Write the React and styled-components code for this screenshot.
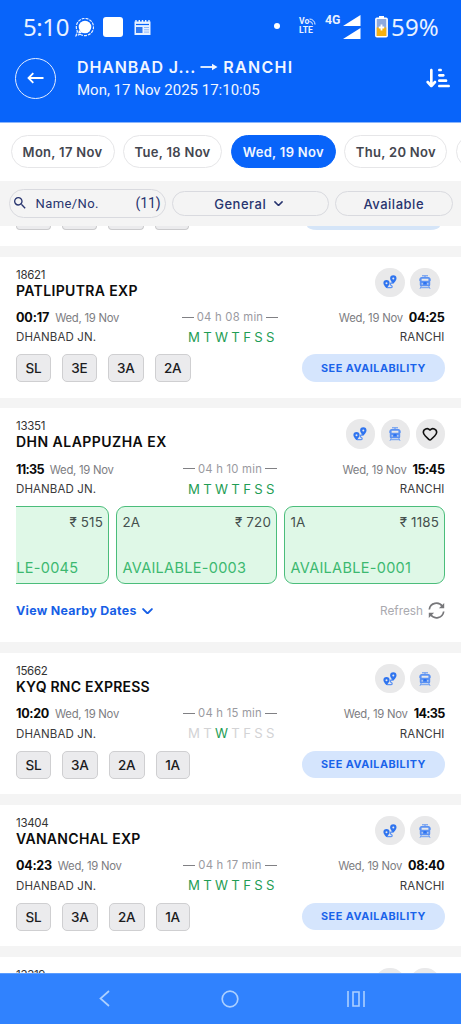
import React from 'react';
import styled, { createGlobalStyle, css } from 'styled-components';
import { FaArrowDownShortWide } from 'react-icons/fa6';
import { MdSearch } from 'react-icons/md';
import { Heart } from 'lucide-react';

const GlobalStyle = createGlobalStyle`
   * {
      box-sizing: border-box;
   }
   body {
      margin: 0;
      background: #fff;
      font-family: Inter, 'Open Sans', sans-serif;
   }
   button {
      font-family: inherit;
      padding: 0;
      margin: 0;
      border: 0;
      background: none;
   }
   svg {
      display: block;
      flex: none;
   }
`;

const Screen = styled.div`
   width: 461px;
   height: 1024px;
   display: flex;
   flex-direction: column;
   overflow: hidden;
   background: #f4f4f4;
`;

const Header = styled.header`
   height: 123px;
   flex: none;
   background: #0864fa;
   border-bottom: 1px solid #8cb6fb;
   color: #fff;
`;

const StatusBar = styled.div`
   height: 52px;
   padding: 2px 21px 0 23px;
   display: flex;
   align-items: center;
   font-family: 'Noto Sans', sans-serif;
`;

const StatusText = styled.span`
   width: ${({ $width }) => $width}px;
   font-size: 24px;
   line-height: 30px;
   letter-spacing: ${({ $track }) => $track}px;
   white-space: nowrap;
   color: #e9f1ff;
`;

const StatusGroup = styled.div`
   display: flex;
   align-items: center;
`;

const StatusRight = styled(StatusGroup)`
   margin-left: auto;
`;

const BatteryGroup = styled(StatusGroup)`
   margin-left: 14px;
   gap: 3px;
`;

const WhiteSquare = styled.div`
   width: 20px;
   height: 20px;
   margin: 0 11px 0 9px;
   border-radius: 3px;
   background: #fff;
`;

const Dot = styled.div`
   width: 6px;
   height: 6px;
   margin: -2px 19px 0 0;
   border-radius: 50%;
   background: #fff;
`;

const Volte = styled.div`
   width: 26px;
   margin-top: -2px;
   font: 700 8.6px/9px Roboto, sans-serif;
   color: #e9f1ff;
`;

const VolteTop = styled.div`
   display: flex;
   align-items: center;
`;

const NetworkType = styled.div`
   width: 18px;
   margin-top: -15px;
   font: 700 12.3px/14px Roboto, sans-serif;
   color: #e9f1ff;
`;

const TitleBar = styled.div`
   height: 52px;
   padding: 0 11px 0 15px;
   display: flex;
   align-items: center;
`;

const BackButton = styled.button`
   width: 41px;
   height: 41px;
   display: grid;
   place-items: center;
   border: 1.3px solid #e3edff;
   border-radius: 50%;
   color: #fff;
`;

const Titles = styled.div`
   flex: 1;
   margin: 0 0 0 21px;
`;

const Route = styled.h1`
   margin: 0;
   display: flex;
   align-items: center;
   font-size: 16px;
   line-height: 22px;
   font-weight: 600;
   letter-spacing: 0.85px;
   color: #f1f6ff;

   svg {
      margin: 0 5px 0 4px;
   }
`;

const RouteTo = styled.span`
   letter-spacing: 1.3px;
`;

const Subtitle = styled.div`
   margin-top: 1px;
   font: 400 15px/22px Roboto, sans-serif;
   color: #f1f6ff;
`;

const DateTabs = styled.nav`
   height: 57.5px;
   flex: none;
   padding: 12px 0 0 10.5px;
   display: flex;
   gap: 8.3px;
   overflow: hidden;
   background: #fff;
`;

const DateTab = styled.button`
   width: ${({ $width }) => $width}px;
   height: 33px;
   flex: none;
   border: 1px solid #e6e6e8;
   border-radius: 17px;
   font-size: 13px;
   font-weight: 600;
   letter-spacing: 0.3px;
   color: #44464f;

   ${({ $active }) =>
      $active &&
      css`
         border-color: #0864fa;
         background: #0864fa;
         color: #f1f6ff;
      `}
`;

const Filters = styled.div`
   height: 45.5px;
   flex: none;
   padding: 0 8.5px;
   display: flex;
   align-items: center;
   gap: 6.5px;
   color: #28356f;
`;

const filterPill = css`
   display: flex;
   align-items: center;
   border: 1px solid #d9dadf;
   border-radius: 15px;
`;

const SearchBox = styled.div`
   ${filterPill}
   width: 157px;
   height: 29px;
   padding: 0 4px 0 2.5px;
   font: 400 13px Roboto, sans-serif;
   letter-spacing: 0.4px;
`;

const SearchLabel = styled.span`
   flex: 1;
   margin-left: 7.5px;
`;

const Count = styled.span`
   font-size: 14px;
   letter-spacing: -0.1px;
`;

const FilterButton = styled.button`
   ${filterPill}
   width: ${({ $width }) => $width}px;
   height: 25px;
   margin-top: 1px;
   justify-content: center;
   gap: 8px;
   padding-right: ${({ $shift = 0 }) => $shift}px;
   font-size: 13px;
   font-weight: 500;
   letter-spacing: 0.52px;
   color: inherit;
`;

const TrainList = styled.main`
   flex: 1;
   min-height: 0;
   overflow: hidden;
   display: flex;
   flex-direction: column;
   gap: 10.6px;
`;

const Card = styled.article`
   height: ${({ $height }) => $height || 141.2}px;
   flex: none;
   padding: 11px 16px 0;
   background: #fff;
`;

/* the card that is mostly scrolled under the filters */
const CardTail = styled.article`
   height: 20px;
   flex: none;
   padding: 0 16px;
   display: flex;
   align-items: flex-start;
   justify-content: space-between;
   background: #fff;
`;

const ClassTails = styled.div`
   display: flex;
   gap: 10.5px;
`;

const ClassTail = styled.div`
   width: ${({ $width }) => $width}px;
   height: 4px;
   border: 1px solid #cbcbcd;
   border-top: 0;
   border-radius: 0 0 5px 5px;
   background: #ebebed;
`;

const AvailabilityTail = styled.div`
   width: 133px;
   height: 4px;
   margin-right: 5px;
   border-radius: 0 0 10px 10px / 0 0 4px 4px;
   background: #d5e5f8;
`;

const CardHead = styled.div`
   height: 39.5px;
   display: flex;
   justify-content: space-between;
`;

const TrainNumber = styled.div`
   font-size: 11.5px;
   line-height: 15px;
   letter-spacing: -0.3px;
   color: #333;
`;

const TrainName = styled.h2`
   margin: 0;
   font-size: 14px;
   line-height: 15px;
   font-weight: 600;
   letter-spacing: ${({ $track }) => $track}px;
   white-space: nowrap;
   color: #0c0c0c;
`;

const Actions = styled.div`
   display: flex;
   gap: 5.5px;
   padding-right: ${({ $inset }) => ($inset ? 5.5 : 0)}px;
`;

const RoundButton = styled.button`
   width: 29.5px;
   height: 29.5px;
   display: grid;
   place-items: center;
   border-radius: 50%;
   background: #e9e9ea;
   color: #111;
`;

const Row = styled.div`
   display: grid;
   grid-template-columns: 1fr 98px 1fr;
   align-items: center;
   height: ${({ $height }) => $height}px;
`;

const Stop = styled.div`
   display: flex;
   align-items: baseline;
   gap: 6px;
   justify-content: ${({ $end }) => ($end ? 'flex-end' : 'flex-start')};
   padding-right: ${({ $end }) => ($end ? 0.5 : 0)}px;
   white-space: nowrap;
`;

const Time = styled.span`
   font-size: 12.6px;
   font-weight: 700;
   letter-spacing: ${({ $track = -0.3 }) => $track}px;
   color: #0a0a0a;
`;

const StopDate = styled.span`
   font-size: 11.3px;
   letter-spacing: -0.25px;
   color: #7d7d82;
`;

const Station = styled.span`
   font-size: 11.5px;
   letter-spacing: 0.1px;
   color: #3a3a3c;
`;

const Duration = styled.div`
   display: flex;
   align-items: center;
   justify-content: center;
   gap: 3px;
   margin: -1px 1px 0 0;
   font-size: 11.3px;
   letter-spacing: 0.22px;
   white-space: nowrap;
   color: #9a9a9f;

   &::before,
   &::after {
      content: '';
      width: 12px;
      border-top: 1px solid #808084;
   }
`;

const Days = styled.div`
   display: flex;
   justify-content: space-between;
   width: 86.5px;
   margin: -1px 0 0 6.5px;
   font-size: 13.2px;
`;

const Day = styled.span`
   color: ${({ $runs }) => ($runs ? '#1f9d55' : '#d3d3d5')};
`;

const CardFoot = styled.div`
   margin-top: 7.8px;
   height: 28px;
   display: flex;
   justify-content: space-between;
`;

const Classes = styled.div`
   display: flex;
   gap: 10.5px;
`;

const classWidths = { SL: 35, '3E': 35.5, '3A': 36.5, '2A': 36.5, '1A': 34 };

const ClassChip = styled.button`
   width: ${({ $width }) => $width}px;
   height: 28px;
   border: 1px solid #cfcfd1;
   border-radius: 5px;
   background: #ebebed;
   font-size: 13.5px;
   font-weight: 500;
   letter-spacing: -0.3px;
   color: #1c1c1e;
`;

const AvailabilityButton = styled.button`
   width: 143px;
   height: 27.5px;
   border-radius: 14px;
   background: #d5e5fd;
   font-size: 10.8px;
   font-weight: 700;
   letter-spacing: 0.5px;
   color: #1a63ea;
`;

const Fares = styled.div`
   margin-top: 7.5px;
   display: flex;
   justify-content: flex-end;
   gap: 7px;
   overflow: hidden;
`;

const Fare = styled.div`
   width: 161px;
   height: 78px;
   flex: none;
   padding: 6px 5px 5px 5.5px;
   display: flex;
   flex-direction: column;
   justify-content: space-between;
   border: 1px solid #4bbd7b;
   border-radius: 9px;
   background: #dff8e7;
   font-size: 13.4px;
   line-height: 18px;
   color: #45504e;
`;

const FareTop = styled.div`
   display: flex;
   justify-content: space-between;
`;

const Price = styled.span`
   margin-left: auto;
   letter-spacing: 0.15px;
`;

const Seats = styled.div`
   font-size: 14.5px;
   line-height: 20px;
   letter-spacing: 0.3px;
   white-space: nowrap;
   color: #3cb870;
`;

const FareFoot = styled.div`
   height: 54px;
   display: flex;
   align-items: center;
   justify-content: space-between;
`;

const NearbyDates = styled.button`
   display: flex;
   align-items: center;
   gap: 5px;
   font-size: 12.4px;
   font-weight: 700;
   letter-spacing: 0.3px;
   color: #175fe6;
`;

const Refresh = styled.button`
   display: flex;
   align-items: center;
   gap: 5px;
   font-size: 11.8px;
   color: #aaaaaf;
`;

const NavBar = styled.footer`
   height: 51.5px;
   flex: none;
   padding: 0 42px;
   display: grid;
   grid-template-columns: repeat(3, 1fr);
   place-items: center;
   background: #3082fe;
   border-top: 1px solid #5b9dff;
   color: #acd0ff;
`;

const ChatIcon = () => (
   <svg width='19' height='19' viewBox='0 0 19 19'>
      <circle cx='10' cy='9' r='6.3' fill='#fff' />
      <path d='M4 12 3.2 15.6 7 14.8z' fill='#fff' />
      <path
         d='M5.2 16.2A8.6 8.6 0 1 0 2.4 13.2L1 17.7z'
         fill='none'
         stroke='#e9f1ff'
         strokeWidth='1.2'
         strokeDasharray='3 1'
      />
   </svg>
);

const NewsIcon = () => (
   <svg width='17' height='17' viewBox='0 0 17 17'>
      <path d='M2 1v3M5.3 1v3M8.5 1v3M11.7 1v3M15 1v3' stroke='#e9f1ff' strokeWidth='1.4' />
      <path d='M.5 2.5h16V16H.5z' fill='#e9f1ff' />
      <path d='M2 5.5h13' stroke='#0864fa' strokeWidth='1.2' />
      <path d='M2 8h6.5v6H2z' fill='#2f78f0' />
      <path d='M10 8.5h5M10 10.8h5M10 13.1h5' stroke='#8cb6fb' strokeWidth='1' />
   </svg>
);

const WavesIcon = () => (
   <svg width='7' height='7' viewBox='0 0 7 7' fill='none' stroke='#e9f1ff'>
      <path d='M.5 1A5.5 5.5 0 0 1 6 6.5M.5 3.5a3 3 0 0 1 3 3' />
   </svg>
);

const SignalIcon = () => (
   <svg width='18' height='24' viewBox='0 0 18 24' fill='#fff'>
      <path d='M17.5 0v11H0zM17.5 13v11H0z' />
   </svg>
);

const BatteryIcon = () => (
   <svg width='13' height='22' viewBox='0 0 13 22'>
      <path d='M4 0h5v2H4z' fill='#fff' />
      <rect x='.9' y='2.2' width='11.2' height='18.6' rx='1' fill='#8ea9dd' stroke='#fff' strokeWidth='1.6' />
      <path d='M1.7 11.5h9.6V20H1.7z' fill='#f5b010' />
      <path d='M6.5 8.5v6M3.8 11.5h5.4' stroke='#fff' strokeWidth='1.8' />
   </svg>
);

const RouteArrow = () => (
   <svg width='18' height='10' viewBox='0 0 18 10'>
      <path d='M.5 5H14' stroke='#f1f6ff' strokeWidth='1.8' />
      <path d='M12 1.8 17.5 5 12 8.2z' fill='#f1f6ff' />
   </svg>
);

const BackArrow = () => (
   <svg width='17' height='12' viewBox='0 0 17 12' fill='none' stroke='#fff' strokeWidth='1.8'>
      <path d='M16.5 6H1.5M6.3 1.2 1.5 6l4.8 4.8' />
   </svg>
);

const Chevron = ({ size = 9 }) => (
   <svg
      width={size}
      height={size * 0.6}
      viewBox='0 0 10 6'
      fill='none'
      stroke='currentColor'
      strokeWidth='1.7'
      strokeLinecap='round'
      strokeLinejoin='round'
   >
      <path d='m1 1 4 4 4-4' />
   </svg>
);

const PinsIcon = () => (
   <svg width='14' height='14' viewBox='0 0 14 14'>
      <path
         d='M4 12.7h3.8c1.6 0 1.8-1.7.5-2.2C6.7 9.900 7 8.300 8.600 8h1.500'
         fill='none'
         stroke='#5b92f3'
         strokeWidth='1.3'
      />
      <path
         fillRule='evenodd'
         fill='#2f74ef'
         d='M10.300.2A3.200 3.200 0 0 0 7.100 3.400c0 2.100 3.200 5.200 3.200 5.200s3.200-3.100 3.200-5.200A3.200 3.200 0 0 0 10.300.2zm0 2.200a1 1 0 1 1 0 2 1 1 0 0 1 0-2zM3.500 5a3.100 3.100 0 0 0-3.100 3.100c0 2.100 3.100 5.200 3.100 5.200s3.100-3.100 3.100-5.200A3.100 3.100 0 0 0 3.500 5zm0 2.200a1 1 0 1 1 0 2 1 1 0 0 1 0-2z'
      />
   </svg>
);

const TrainIcon = () => (
   <svg width='12' height='14' viewBox='0 0 12 14'>
      <path d='M3 .8h6M6 .8v1.500' stroke='#5b92f3' />
      <path
         fillRule='evenodd'
         fill='#5b92f3'
         d='M2.500 1.900h7Q11.200 1.900 11.200 3.500V10q0 1.300-1.200 1.300H2Q.8 11.300.8 10V3.500Q.8 1.900 2.500 1.900zM2.600 3.700v2h6.800v-2z'
      />
      <path d='M.4 3.500v2.500M11.600 3.500v2.500' stroke='#6b9df2' strokeWidth='.8' />
      <path d='M2.500 8.900h1.500M8 8.900h1.500' stroke='#e9e9ea' strokeWidth='1' />
      <path d='M4.500 7h3v2.300h-3z' fill='#2f74ef' />
      <path d='M2.300 11 1 13.800M9.700 11 11 13.800M1.600 12.700h8.800' stroke='#6b9df2' />
   </svg>
);

const RefreshIcon = () => (
   <svg width='17' height='17' viewBox='0 0 17 17' fill='none' stroke='#77777a' strokeWidth='1.7'>
      <path d='M1.300 7.500A7.200 7.200 0 0 1 14.500 4.600M15.700 9.500A7.200 7.200 0 0 1 2.500 12.400' />
      <path d='M16.200.9v5.300h-5.300zM.8 16.100v-5.300h5.300z' fill='#77777a' stroke='none' />
   </svg>
);

const trains = [
   {
      number: '18621',
      name: 'PATLIPUTRA EXP',
      track: 0.36,
      depart: '00:17',
      departTrack: -0.15,
      arrive: '04:25',
      duration: '04 h 08 min',
      classes: ['SL', '3E', '3A', '2A'],
   },
   {
      number: '13351',
      name: 'DHN ALAPPUZHA EX',
      track: 0.47,
      depart: '11:35',
      departTrack: -0.7,
      arrive: '15:45',
      arriveTrack: -0.45,
      duration: '04 h 10 min',
      favourite: true,
      fares: [
         { price: '₹ 515', seats: 'AVAILABLE-0045' },
         { name: '2A', price: '₹ 720', seats: 'AVAILABLE-0003' },
         { name: '1A', price: '₹ 1185', seats: 'AVAILABLE-0001' },
      ],
   },
   {
      number: '15662',
      name: 'KYQ RNC EXPRESS',
      track: 0.22,
      depart: '10:20',
      arrive: '14:35',
      arriveTrack: -0.7,
      duration: '04 h 15 min',
      runs: [2],
      classes: ['SL', '3A', '2A', '1A'],
   },
   {
      number: '13404',
      name: 'VANANCHAL EXP',
      track: 0.3,
      depart: '04:23',
      arrive: '08:40',
      duration: '04 h 17 min',
      classes: ['SL', '3A', '2A', '1A'],
   },
];

const TrainHead = ({ number, name, track, favourite }) => (
   <CardHead>
      <div>
         <TrainNumber>{number}</TrainNumber>
         <TrainName $track={track}>{name}</TrainName>
      </div>
      <Actions $inset={!favourite}>
         <RoundButton>
            <PinsIcon />
         </RoundButton>
         <RoundButton>
            <TrainIcon />
         </RoundButton>
         {favourite && (
            <RoundButton>
               <Heart size={16} strokeWidth={2.4} />
            </RoundButton>
         )}
      </Actions>
   </CardHead>
);

const TrainCard = ({ train }) => {
   const { runs, fares, classes } = train;

   return (
      <Card $height={fares ? 234 : undefined}>
         <TrainHead {...train} />
         <Row $height={21}>
            <Stop>
               <Time $track={train.departTrack}>{train.depart}</Time>
               <StopDate>Wed, 19 Nov</StopDate>
            </Stop>
            <Duration>{train.duration}</Duration>
            <Stop $end>
               <StopDate>Wed, 19 Nov</StopDate>
               <Time $track={train.arriveTrack}>{train.arrive}</Time>
            </Stop>
         </Row>
         <Row $height={18.5}>
            <Station>DHANBAD JN.</Station>
            <Days>
               {[...'MTWTFSS'].map((day, i) => (
                  <Day key={i} $runs={!runs || runs.includes(i)}>
                     {day}
                  </Day>
               ))}
            </Days>
            <Stop $end>
               <Station>RANCHI</Station>
            </Stop>
         </Row>
         {fares ? (
            <>
               <Fares>
                  {fares.map(({ name, price, seats }) => (
                     <Fare key={seats}>
                        <FareTop>
                           {name}
                           <Price>{price}</Price>
                        </FareTop>
                        <Seats>{seats}</Seats>
                     </Fare>
                  ))}
               </Fares>
               <FareFoot>
                  <NearbyDates>
                     View Nearby Dates
                     <Chevron size={11} />
                  </NearbyDates>
                  <Refresh>
                     Refresh
                     <RefreshIcon />
                  </Refresh>
               </FareFoot>
            </>
         ) : (
            <CardFoot>
               <Classes>
                  {classes.map((c) => (
                     <ClassChip key={c} $width={classWidths[c]}>
                        {c}
                     </ClassChip>
                  ))}
               </Classes>
               <AvailabilityButton>SEE AVAILABILITY</AvailabilityButton>
            </CardFoot>
         )}
      </Card>
   );
};

export default function App() {
   return (
      <Screen>
         <GlobalStyle />
         <Header>
            <StatusBar>
               <StatusText $width={52} $track={-0.4}>
                  5:10
               </StatusText>
               <StatusGroup>
                  <ChatIcon />
                  <WhiteSquare />
                  <NewsIcon />
               </StatusGroup>
               <StatusRight>
                  <Dot />
                  <Volte>
                     <VolteTop>
                        Vo
                        <WavesIcon />
                     </VolteTop>
                     LTE
                  </Volte>
                  <NetworkType>4G</NetworkType>
                  <SignalIcon />
               </StatusRight>
               <BatteryGroup>
                  <BatteryIcon />
                  <StatusText $width={49} $track={0.2}>
                     59%
                  </StatusText>
               </BatteryGroup>
            </StatusBar>
            <TitleBar>
               <BackButton>
                  <BackArrow />
               </BackButton>
               <Titles>
                  <Route>
                     DHANBAD J...
                     <RouteArrow />
                     <RouteTo>RANCHI</RouteTo>
                  </Route>
                  <Subtitle>Mon, 17 Nov 2025 17:10:05</Subtitle>
               </Titles>
               <FaArrowDownShortWide size={24} />
            </TitleBar>
         </Header>

         <DateTabs>
            <DateTab $width={104}>Mon, 17 Nov</DateTab>
            <DateTab $width={99.5}>Tue, 18 Nov</DateTab>
            <DateTab $width={105.5} $active>
               Wed, 19 Nov
            </DateTab>
            <DateTab $width={103}>Thu, 20 Nov</DateTab>
            <DateTab $width={99} />
         </DateTabs>

         <Filters>
            <SearchBox>
               <MdSearch size={16} />
               <SearchLabel>Name/No.</SearchLabel>
               <Count>(11)</Count>
            </SearchBox>
            <FilterButton $width={156.5} $shift={3}>
               General
               <Chevron />
            </FilterButton>
            <FilterButton $width={117.5}>Available</FilterButton>
         </Filters>

         <TrainList>
            <CardTail>
               <ClassTails>
                  <ClassTail $width={35} />
                  <ClassTail $width={35.5} />
                  <ClassTail $width={36.5} />
                  <ClassTail $width={34} />
               </ClassTails>
               <AvailabilityTail />
            </CardTail>
            {trains.map((train) => (
               <TrainCard key={train.number} train={train} />
            ))}
            <Card>
               <TrainHead number='13319' />
            </Card>
         </TrainList>

         <NavBar>
            <svg width='11' height='17' viewBox='0 0 11 17' fill='none' stroke='currentColor' strokeWidth='1.7'>
               <path d='M10 1 1.500 8.500 10 16' />
            </svg>
            <svg width='18' height='18' viewBox='0 0 18 18' fill='none' stroke='currentColor' strokeWidth='1.7'>
               <circle cx='9' cy='9' r='7.800' />
            </svg>
            <svg width='18' height='16' viewBox='0 0 18 16' fill='none' stroke='currentColor' strokeWidth='1.6'>
               <path d='M1 0v16M17 0v16M6 1h6v14H6z' />
            </svg>
         </NavBar>
      </Screen>
   );
}
